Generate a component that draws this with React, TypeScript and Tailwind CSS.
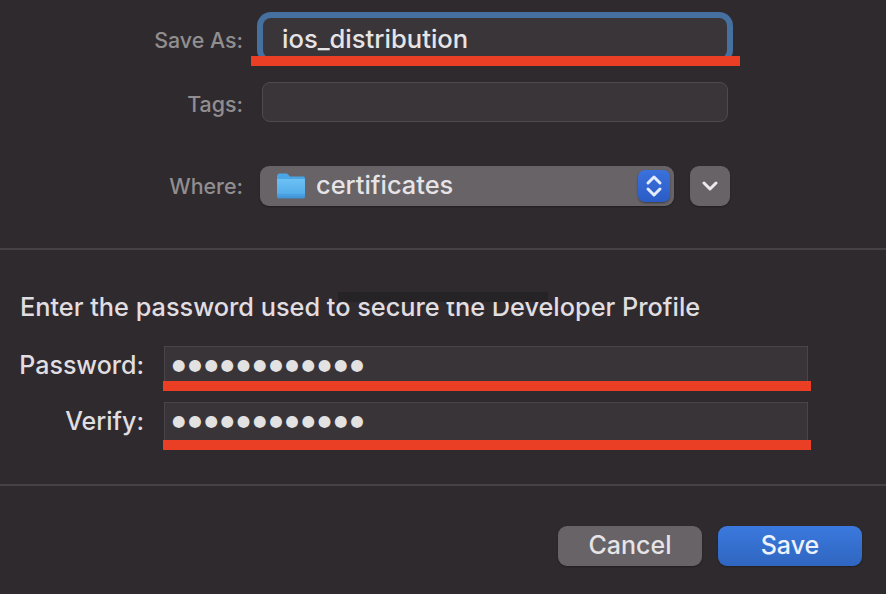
import React from "react";

const Red = ({ className }: { className: string }) => (
  <div className={`absolute h-[10px] bg-[#ea3e25] ${className}`} />
);

const Label = ({ children, className }: { children: React.ReactNode; className: string }) => (
  <span className={`w-[243px] shrink-0 text-right text-[21.4px] font-[450] text-[#918e90] ${className}`}>{children}</span>
);

const Folder = () => (
  <svg width="30" height="28" viewBox="0 0 30 28" className="shrink-0">
    <defs>
      <linearGradient id="f" x1="0" y1="0" x2="0" y2="1">
        <stop offset="0" stopColor="#6cc0f4" />
        <stop offset="0.75" stopColor="#55aeea" />
        <stop offset="1" stopColor="#3d8fd2" />
      </linearGradient>
    </defs>
    <path d="M1 4.500C1 3 2 1.500 3.500 1.500H10c1 0 1.600.4 2.300 1.200L14 4.500h13.500C28.600 4.500 29 5.400 29 6.500V8H1Z" fill="#4ba6e6" />
    <path d="M1 7h26.500c1 0 1.500.7 1.500 1.700v16.100c0 1-.7 1.700-1.700 1.700H2.700C1.700 26.500 1 25.800 1 24.800Z" fill="url(#f)" />
    <path d="M1 22.500h28M1 24.500h28" stroke="#3f93d6" strokeWidth="0.6" />
  </svg>
);

const Dots = () => (
  <span className="font-['DejaVu_Sans',sans-serif] text-[15.5px] leading-[36px] tracking-[2.67px] text-[#e3e2e3]">●●●●●●●●●●●●</span>
);

const PasswordRow = ({ label, bar, className }: { label: string; bar: string; className: string }) => (
  <div className={`flex items-start ${className}`}>
    <span className="w-[144px] shrink-0 text-right text-[25px] font-[450] leading-[38px] text-[#e0dee0]">{label}</span>
    <div className="relative ml-[20px] flex h-[40px] w-[644px] items-start border border-b-0 border-[#4a454a] bg-[#393438] pl-[7px]">
      <Dots />
      <Red className={bar} />
    </div>
  </div>
);

export default function App() {
  return (
    <div className="relative flex h-[594px] w-[886px] flex-col overflow-hidden bg-[#2f2a2e] font-['Inter',sans-serif]">
      <section className="h-[250px] shrink-0 border-b-2 border-[#464145] pt-[18px]">
        <div className="flex h-10 items-start">
          <Label className="leading-[44px]">Save As:</Label>
          <div className="relative ml-[20px] h-10 w-[464px] rounded-[8px] bg-[#3a3539] pl-[19px] text-[25.6px] font-[450] leading-[42px] text-[#e6e4e6] shadow-[0_0_0_6px_#45709f]">
            ios_distribution
            <Red className="-left-[12px] -right-[13px] top-[38px]" />
          </div>
        </div>
        <div className="mt-6 flex h-10 items-start">
          <Label className="leading-[45px]">Tags:</Label>
          <div className="ml-[19px] h-10 w-[466px] rounded-[8px] border border-[#4f4a4f] bg-[#3a3539]" />
        </div>
        <div className="mt-11 flex h-10 items-start">
          <Label className="leading-[41px]">Where:</Label>
          <div className="ml-[17px] flex h-10 w-[414px] items-center rounded-[9px] bg-[#676366] pb-[1px] pl-[16px] pr-[4px] text-[25.4px] font-[450] text-[#e6e4e6] shadow-[0_1px_2px_rgba(0,0,0,0.3)]">
            <Folder />
            <span className="ml-[10px] flex-1">certificates</span>
            <div className="flex h-8 w-8 items-center justify-center rounded-[7px] bg-gradient-to-b from-[#3a71dc] to-[#2b5cc6] shadow-[0_1px_2px_rgba(0,0,0,0.4)]">
              <svg width="20" height="26" viewBox="0 0 20 26" fill="none" stroke="#e4ebfb" strokeWidth="3" strokeLinecap="round" strokeLinejoin="round">
                <path d="M4 10l6-6 6 6M4 16l6 6 6-6" />
              </svg>
            </div>
          </div>
          <div className="ml-4 flex h-10 w-10 items-center justify-center rounded-[9px] bg-[#676366] shadow-[0_1px_2px_rgba(0,0,0,0.3)]">
            <svg width="16" height="12" viewBox="0 0 16 12" fill="none" stroke="#eceaec" strokeWidth="3" strokeLinecap="round" strokeLinejoin="round">
              <path d="M2 3l6 6 6-6" />
            </svg>
          </div>
        </div>
      </section>

      <section className="relative h-[236px] shrink-0 border-b-2 border-[#464145] pl-5 pt-[41px]">
        <p className="whitespace-nowrap text-[25.3px] font-[450] leading-[32px] text-[#e0dee0]">Enter the password used to secure the Developer Profile</p>
        <div className="absolute left-[338px] top-[42px] h-[10px] w-[210px] bg-[#252326]" />
        <PasswordRow className="-ml-5 mt-[23px]" label="Password:" bar="-left-[2px] -right-[4px] top-[34px]" />
        <PasswordRow className="-ml-5 mt-[16px]" label="Verify:" bar="-left-[2px] -right-[4px] top-[37px]" />
      </section>

      <footer className="flex justify-end gap-4 pr-6 pt-[40px]">
        <button className="h-10 w-[144px] rounded-[9px] bg-[#676366] text-[25px] font-[450] text-[#e6e4e6] shadow-[0_1px_2px_rgba(0,0,0,0.3)]">Cancel</button>
        <button className="h-10 w-[144px] rounded-[9px] bg-gradient-to-b from-[#3b79de] to-[#2f66c0] text-[25px] font-[450] text-[#edf2fc] shadow-[0_1px_2px_rgba(0,0,0,0.3)]">Save</button>
      </footer>
    </div>
  );
}
